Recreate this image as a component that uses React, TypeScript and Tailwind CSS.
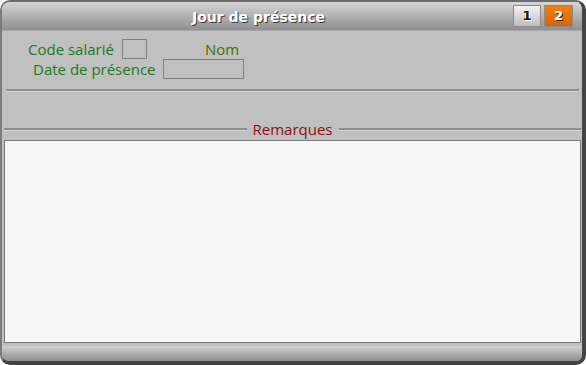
export default function App() {
  const label = "text-[15px] leading-[20px] text-[#1b7a1b]"
  return (
    <div className="w-[586px] h-[365px] bg-white">
      <div
        className="w-[586px] h-[365px] flex flex-col overflow-hidden rounded-[10px] border-l-2 border-t-2 border-r-4 border-b-4 border-l-[#7c7c7c] border-t-[#6c6c6c] border-r-[#444444] border-b-[#444444] bg-[#c0c0c0]"
        style={{ fontFamily: '"Open Sans", sans-serif' }}
      >
        {/* title bar */}
        <div className="h-[29px] shrink-0 flex items-center bg-gradient-to-b from-[#d6d6d6] to-[#8f8f8f] border-b border-b-[#a8a8a8]">
          <div
            className="flex-1 text-center text-[14px] font-bold text-white [text-shadow:1px_1px_0_#3a3a3a] pl-[2px] pt-[2px]"
            style={{ fontFamily: '"DejaVu Sans", sans-serif' }}
          >
            Jour de présence
          </div>
          <div className="flex gap-[3px] mr-[9px] mt-[-1px]" style={{ fontFamily: '"DejaVu Sans", sans-serif' }}>
            <div className="w-[28px] h-[22px] flex items-center justify-center border border-[#8a8a8a] bg-gradient-to-b from-[#f4f4f4] to-[#bdbdbd] text-[13px] font-bold text-[#111111] [text-shadow:1px_1px_0_#ffffff]">
              1
            </div>
            <div className="w-[29px] h-[22px] flex items-center justify-center border border-[#8a8a8a] bg-gradient-to-b from-[#f08010] to-[#d86400] text-[13px] font-bold text-white [text-shadow:1px_1px_0_#333333]">
              2
            </div>
          </div>
        </div>

        {/* form */}
        <div className="pt-[8px] pl-[2px] pr-[1px] flex flex-col">
          <div className="h-[20px] flex items-center pl-[24px]">
            <span className={label}>Code salarié</span>
            <div className="ml-[8px] w-[25px] h-[20px] border border-[#808080]" />
            <span className="ml-[58px] text-[15px] leading-[20px] text-[#3f6f00]">Nom</span>
          </div>
          <div className="h-[20px] flex items-center pl-[29px]">
            <span className={label}>Date de présence</span>
            <div className="ml-[7px] w-[81px] h-[20px] border border-[#808080]" />
          </div>
          <div className="mt-[10px] mx-[2px] h-[3px] border-t-2 border-t-[#8e8e8e] border-b border-b-[#d4d4d4]" />
        </div>

        {/* remarques */}
        <div className="flex-1 flex flex-col pl-[2px] pr-[1px] pt-[29px]">
          <div className="h-[16px] flex items-center">
            <div className="flex-1 h-[3px] border-t-2 border-t-[#8e8e8e] border-b border-b-[#d4d4d4]" />
            <span className="px-[6px] text-[15px] leading-[16px] text-[#8b1010]">Remarques</span>
            <div className="flex-1 h-[3px] border-t-2 border-t-[#8e8e8e] border-b border-b-[#d4d4d4]" />
          </div>
          <div className="mt-[3px] flex-1 border border-[#7a7a7a] bg-[#f7f7f7]" />
          <div className="h-[3px] shrink-0" />
        </div>

        {/* bottom bar */}
        <div className="h-[15px] shrink-0 bg-gradient-to-b from-[#d2d2d2] to-[#8e8e8e]" />
      </div>
    </div>
  )
}
